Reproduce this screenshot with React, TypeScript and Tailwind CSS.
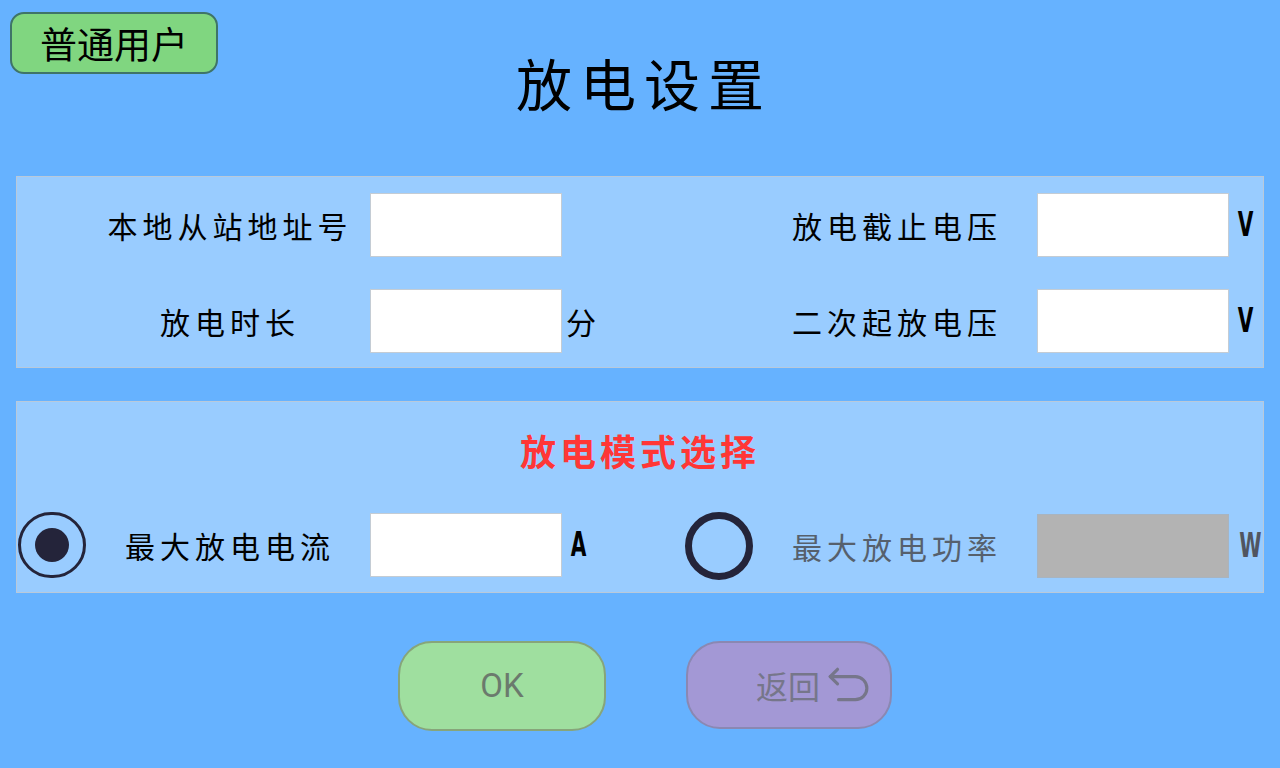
import React from 'react';

const cjk = { fontFamily: '"Noto Sans CJK SC", "Noto Sans", sans-serif' };
const narrow = { fontFamily: '"DejaVu Sans Condensed", "Liberation Sans", sans-serif' };

const Field = ({ disabled }: { disabled?: boolean }) => (
    <div
        className={
            disabled
                ? 'shrink-0 w-[192px] h-[64px] bg-[#b3b3b3] border border-[#a8b4c0]'
                : 'shrink-0 w-[192px] h-[64px] bg-white border border-[#c4ccd4]'
        }
    />
);

const Row = ({
    label,
    unit,
    radio,
    muted,
    disabled,
    unitCjk,
}: {
    label: string;
    unit?: string;
    radio?: React.ReactNode;
    muted?: boolean;
    disabled?: boolean;
    unitCjk?: boolean;
}) => (
    <div className="flex items-center">
        <div className="shrink-0 w-[69px] flex items-center justify-center">{radio}</div>
        <div
            className={`shrink-0 w-[284px] pl-[4px] text-center text-[30px] leading-[40px] tracking-[5px] ${muted ? 'text-[#56606c]' : 'text-black'}`}
            style={cjk}
        >
            {label}
        </div>
        <Field disabled={disabled} />
        {unit && (
            <span
                className={
                    unitCjk
                        ? 'ml-[4px] text-[30px] leading-[40px] text-black'
                        : `inline-block ml-[5px] text-[33px] leading-[40px] font-bold scale-x-[0.68] ${muted ? 'text-[#505560]' : 'text-black'}`
                }
                style={unitCjk ? cjk : narrow}
            >
                {unit}
            </span>
        )}
    </div>
);

const App = () => {
    return (
        <div className="w-[1280px] h-[768px] bg-[#66b2ff] overflow-hidden" style={cjk}>
            {/* header */}
            <div className="grid grid-cols-[1fr_auto_1fr] h-[176px]">
                <div>
                    <button className="mt-[12px] ml-[10px] w-[208px] h-[62px] rounded-[14px] bg-[#80d680] border-2 border-[#3f7468] text-[37px] leading-[56px] text-black">
                        普通用户
                    </button>
                </div>
                <h1 className="pt-[50px] text-[56px] leading-[64px] tracking-[8px] font-normal text-black pl-[8px]">
                    放电设置
                </h1>
                <div />
            </div>

            {/* settings panel */}
            <div className="mx-[16px] w-[1248px] h-[192px] bg-[#99ccff] border border-[#b9c9da] pt-[16px] flex flex-col gap-[32px]">
                <div className="flex">
                    <div className="shrink-0 w-[667px]">
                        <Row label="本地从站地址号" />
                    </div>
                    <Row label="放电截止电压" unit="V" />
                </div>
                <div className="flex">
                    <div className="shrink-0 w-[667px]">
                        <Row label="放电时长" unit="分" unitCjk />
                    </div>
                    <Row label="二次起放电压" unit="V" />
                </div>
            </div>

            {/* mode panel */}
            <div className="mt-[33px] mx-[16px] w-[1248px] h-[192px] bg-[#99ccff] border border-[#b9c9da]">
                <div className="pt-[24px] text-center text-[36px] leading-[48px] tracking-[4px] font-bold text-[#ff3636]">
                    放电模式选择
                </div>
                <div className="flex mt-[38px]">
                    <div className="shrink-0 w-[667px]">
                        <Row
                            label="最大放电电流"
                            unit="A"
                            radio={
                                <div className="w-[68px] h-[66px] rounded-full border-[3px] border-[#24243a] flex items-center justify-center">
                                    <div className="w-[34px] h-[34px] rounded-full bg-[#24243a]" />
                                </div>
                            }
                        />
                    </div>
                    <Row
                        label="最大放电功率"
                        unit="W"
                        muted
                        disabled
                        radio={<div className="w-[68px] h-[68px] rounded-full border-[7px] border-[#24243a]" />}
                    />
                </div>
            </div>

            {/* actions */}
            <div className="mt-[48px] flex justify-center gap-[80px] pl-[10px]">
                <button className="w-[208px] h-[90px] rounded-[34px] bg-[#9fdf9f] border-2 border-[#87a57a] text-[33px] text-[#6b7a6d]" style={{ fontFamily: '"Roboto", "Liberation Sans", sans-serif' }}>
                    OK
                </button>
                <button className="w-[206px] h-[88px] rounded-[34px] bg-[#a398d5] border-2 border-[#8a88b2] flex items-center justify-center gap-[6px] pl-[48px] text-[#76768a]">
                    <span className="text-[32px] leading-[40px]" style={cjk}>返回</span>
                    <svg width="44" height="38" viewBox="0 0 42 36" fill="none" stroke="currentColor" strokeWidth="3" strokeLinecap="round" strokeLinejoin="round">
                        <path d="M11 3 L4 10 L11 17" />
                        <path d="M4 10 H28 A11 11 0 0 1 28 32 H12" />
                    </svg>
                </button>
            </div>
        </div>
    );
};

export default App;
